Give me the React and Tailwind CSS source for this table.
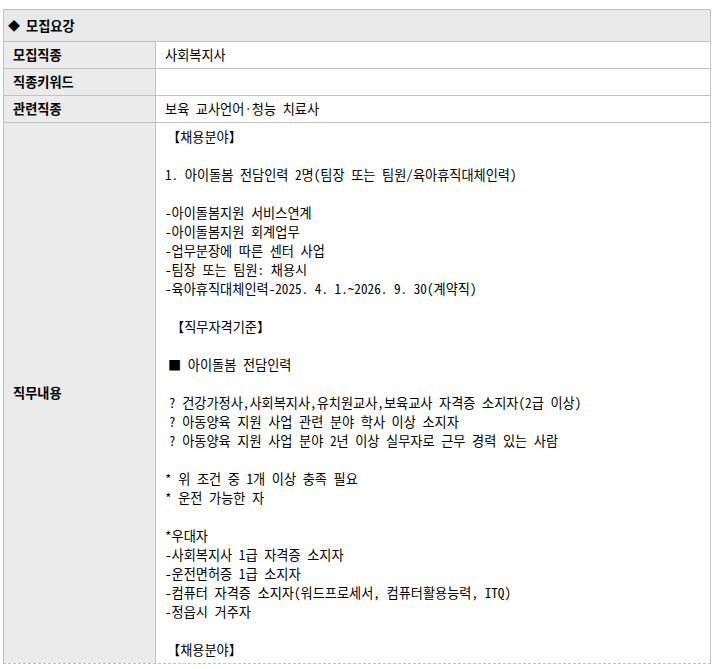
import React from "react";

const lines = [
  { text: "【채용분야】", cls: "pl-[2px]" },
  { text: "", cls: "" },
  { text: "1. 아이돌봄 전담인력 2명(팀장 또는 팀원/육아휴직대체인력)", cls: "" },
  { text: "", cls: "" },
  { text: "-아이돌봄지원 서비스연계", cls: "" },
  { text: "-아이돌봄지원 회계업무", cls: "" },
  { text: "-업무분장에 따른 센터 사업", cls: "" },
  { text: "-팀장 또는 팀원: 채용시", cls: "" },
  { text: "-육아휴직대체인력-2025. 4. 1.~2026. 9. 30(계약직)", cls: "" },
  { text: "", cls: "" },
  { text: "【직무자격기준】", cls: "pl-[6px]" },
  { text: "", cls: "" },
  { text: "■ 아이돌봄 전담인력", cls: "pl-[3px]" },
  { text: "", cls: "" },
  { text: "? 건강가정사,사회복지사,유치원교사,보육교사 자격증 소지자(2급 이상)", cls: "pl-[4px]" },
  { text: "? 아동양육 지원 사업 관련 분야 학사 이상 소지자", cls: "pl-[4px]" },
  { text: "? 아동양육 지원 사업 분야 2년 이상 실무자로 근무 경력 있는 사람", cls: "pl-[4px]" },
  { text: "", cls: "" },
  { text: "* 위 조건 중 1개 이상 충족 필요", cls: "" },
  { text: "* 운전 가능한 자", cls: "" },
  { text: "", cls: "" },
  { text: "*우대자", cls: "" },
  { text: "-사회복지사 1급 자격증 소지자", cls: "" },
  { text: "-운전면허증 1급 소지자", cls: "" },
  { text: "-컴퓨터 자격증 소지자(워드프로세서, 컴퓨터활용능력, ITQ)", cls: "" },
  { text: "-정읍시 거주자", cls: "" },
  { text: "", cls: "" },
  { text: "【채용분야】", cls: "pl-[2px]" },
];

// 위쪽 짧은 항목들
const rows = [
  { label: "모집직종", value: "사회복지사" },
  { label: "직종키워드", value: "" },
  { label: "관련직종", value: "보육 교사언어·청능 치료사" },
];

const Row = ({ label, value }) => (
  <div className="grid grid-cols-[152px_1fr] h-[27px] border-t border-[#c2c2c2]">
    <div className="bg-[#ebebeb] border-r border-[#c2c2c2] flex items-center pl-[9px] font-bold">
      {label}
    </div>
    <div className="flex items-center pl-[9px]">{value}</div>
  </div>
);

export default function App() {
  return (
    <div className="min-h-[669px] bg-white pt-[9px] pl-[3px] text-black text-[13.2px] [font-family:'Noto_Sans_CJK_KR',sans-serif] [font-feature-settings:'hwid']">
      <div className="w-[708px] border-x border-t border-[#c2c2c2]">
        <div className="h-[31px] bg-[#e9e9e9] flex items-center gap-[6px] pl-[4px] font-bold">
          <span className="text-[12px]">◆</span>
          <span>모집요강</span>
        </div>
        {rows.map((r) => (
          <Row key={r.label} label={r.label} value={r.value} />
        ))}
        <div className="grid grid-cols-[152px_1fr] h-[541px] border-t border-[#c2c2c2]">
          <div className="bg-[#ebebeb] border-r border-[#c2c2c2] flex items-center pl-[9px] font-bold">
            직무내용
          </div>
          <div className="overflow-hidden pt-[4px] pl-[9px] leading-[19px]">
            {lines.map((l, i) => (
              <div key={i} className={`h-[19px] whitespace-pre ${l.cls}`}>
                {l.text}
              </div>
            ))}
          </div>
        </div>
      </div>
      <div className="w-[708px] border-t border-dashed border-[#c4c4c4]"></div>
    </div>
  );
}
